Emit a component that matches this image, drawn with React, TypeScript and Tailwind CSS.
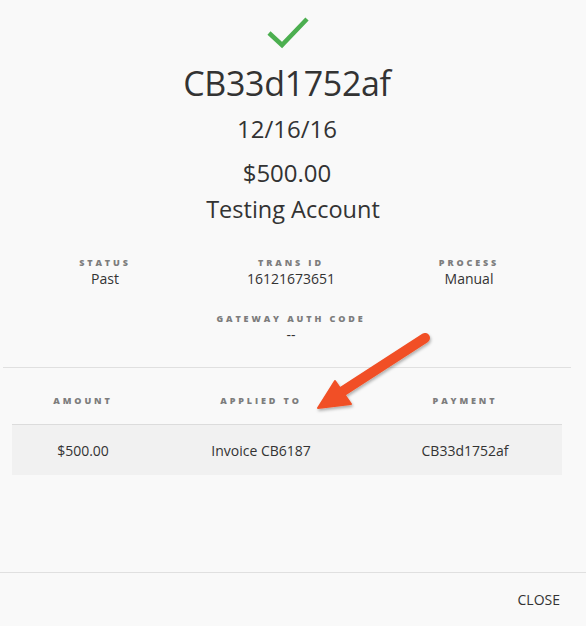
import React from "react";

const font = { fontFamily: '"Open Sans", "Noto Sans", sans-serif' };

function Label({ children }: { children: React.ReactNode }) {
  return (
    <div className="text-[9px] font-extrabold uppercase leading-[12px] tracking-[0.32em] text-[#7d7d7d]">
      {children}
    </div>
  );
}

function Stat({ label, value }: { label: string; value: string }) {
  return (
    <div className="flex flex-col items-center">
      <Label>{label}</Label>
      <div className="text-[14px] leading-[20px] text-[#333]">{value}</div>
    </div>
  );
}

export default function App() {
  return (
    <div
      className="relative flex h-[626px] w-[586px] flex-col overflow-hidden bg-[#f9f9f9] text-[#333]"
      style={font}
    >
      {/* content area (scrollbar gutter on the right) */}
      <div className="w-[574px]">
        <div className="flex flex-col items-center pt-[14px]">
          <svg width="44" height="36" viewBox="0 0 44 36" className="ml-[2px]">
            <path d="M3 19 L16 31 L41 5" fill="none" stroke="#4caf50" strokeWidth="4.5" />
          </svg>
          <div className="mt-[11px] text-[34px] leading-[44px] tracking-[-0.01em]">CB33d1752af</div>
          <div className="mt-[9px] text-[24px] leading-[30px]">12/16/16</div>
          <div className="mt-[14px] text-[24px] leading-[30px]">$500.00</div>
          <div className="ml-[12px] mt-[6px] text-[23.5px] leading-[30px]">Testing Account</div>
        </div>

        <div className="mt-[33px] grid grid-cols-[186px_186px_170px] pl-[12px]">
          <Stat label="Status" value="Past" />
          <Stat label="Trans ID" value="16121673651" />
          <Stat label="Process" value="Manual" />
        </div>
        <div className="mt-[24px] flex justify-center pl-[8px]">
          <Stat label="Gateway Auth Code" value="--" />
        </div>

        <div className="ml-[3px] mr-[3px] mt-[22px] border-t border-[#e0e0e0]" />

        <div className="mx-[12px] mt-[27px]">
          <div className="grid grid-cols-[142px_214px_194px] pb-[17px]">
            <div className="text-center"><Label>Amount</Label></div>
            <div className="text-center"><Label>Applied To</Label></div>
            <div className="text-center"><Label>Payment</Label></div>
          </div>
          <div className="grid h-[51px] grid-cols-[142px_214px_194px] items-center border-t border-[#dcdcdc] bg-[#f1f1f1] text-[14px]">
            <div className="text-center">$500.00</div>
            <div className="text-center">Invoice CB6187</div>
            <div className="text-center">CB33d1752af</div>
          </div>
        </div>
      </div>

      <div className="mt-auto flex h-[54px] items-center justify-end border-t border-[#e0e0e0] pr-[26px]">
        <button type="button" className="text-[14px] text-[#333]">CLOSE</button>
      </div>

      {/* annotation arrow */}
      <svg
        className="pointer-events-none absolute left-0 top-0"
        width="586"
        height="626"
        viewBox="0 0 586 626"
      >
        <defs>
          <filter id="sh" x="-20%" y="-20%" width="140%" height="140%">
            <feDropShadow dx="1" dy="2" stdDeviation="1.5" floodColor="#000" floodOpacity="0.3" />
          </filter>
        </defs>
        <g filter="url(#sh)" fill="#f15025" stroke="#f15025">
          <line x1="425" y1="338" x2="340" y2="393" strokeWidth="10" strokeLinecap="round" />
          <polygon points="318,408 335,381 351,404" strokeWidth="2" strokeLinejoin="round" />
        </g>
      </svg>
    </div>
  );
}
